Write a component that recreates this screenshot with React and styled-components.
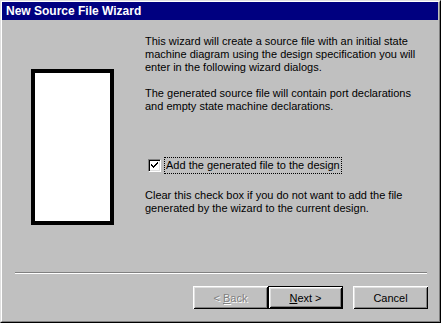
import React from 'react';
import styled, { createGlobalStyle } from 'styled-components';

const GlobalStyle = createGlobalStyle`
    html, body {
        margin: 0;
        padding: 0;
        background: #c0c0c0;
    }
    body {
        font-family: "Liberation Sans", Arial, sans-serif;
        font-size: 11px;
    }
`;

const Window = styled.div`
    box-sizing: border-box;
    width: 441px;
    height: 323px;
    background: #c0c0c0;
    border-top: 1px solid #dfdfdf;
    border-left: 1px solid #dfdfdf;
    border-right: 1px solid #000;
    border-bottom: 1px solid #000;
    display: flex;
    flex-direction: column;
`;

const Frame = styled.div`
    flex: 1;
    display: flex;
    flex-direction: column;
    border-top: 1px solid #fff;
    border-left: 1px solid #fff;
    border-right: 1px solid #808080;
    border-bottom: 1px solid #808080;
    padding: 0 1px 0 0;
`;

const TitleBar = styled.div`
    height: 18px;
    background: #000080;
    color: #fff;
    font-weight: bold;
    font-size: 12px;
    display: flex;
    align-items: center;
    padding-left: 4px;
`;

const Body = styled.div`
    display: flex;
    height: 252px;
`;

const ArtColumn = styled.div`
    width: 143px;
    display: flex;
    align-items: flex-start;
    padding-left: 29px;
    padding-top: 49px;
    box-sizing: border-box;
`;

const Art = styled.div`
    width: 75px;
    height: 148px;
    background: #fff;
    border: 4px solid #000;
`;

const TextColumn = styled.div`
    padding-top: 15px;
    width: 280px;
    color: #000;
    line-height: 13px;
`;

const Para = styled.p`
    margin: 0 0 13px 0;
`;

const CheckRow = styled.div`
    display: flex;
    align-items: center;
    margin: 45px 0 16px 3px;
`;

const Box = styled.span`
    box-sizing: border-box;
    width: 13px;
    height: 13px;
    background: #fff;
    border-top: 1px solid #808080;
    border-left: 1px solid #808080;
    border-right: 1px solid #fff;
    border-bottom: 1px solid #fff;
    box-shadow: inset 1px 1px 0 #000, inset -1px -1px 0 #dfdfdf;
    display: flex;
    align-items: center;
    justify-content: center;
    margin-right: 4px;
`;

const Label = styled.span`
    outline: 1px dotted #000;
    padding: 1px 1px;
    line-height: 13px;
`;

const Separator = styled.div`
    margin: 0 11px 0 13px;
    height: 0;
    border-top: 1px solid #808080;
    border-bottom: 1px solid #fff;
`;

const ButtonRow = styled.div`
    display: flex;
    justify-content: flex-end;
    padding: 12px 10px 0 0;
`;

const Button = styled.button`
    box-sizing: border-box;
    width: 75px;
    height: 23px;
    margin-left: ${(p) => p.gap || 0}px;
    background: #c0c0c0;
    font-family: "Liberation Sans", Arial, sans-serif;
    font-size: 11px;
    color: ${(p) => (p.disabled ? '#808080' : '#000')};
    text-shadow: ${(p) => (p.disabled ? '1px 1px 0 #fff' : 'none')};
    border: ${(p) => (p.primary ? '1px solid #000' : 'none')};
    box-shadow: inset 1px 1px 0 #fff, inset -1px -1px 0 #000, inset 2px 2px 0 #dfdfdf, inset -2px -2px 0 #808080;
    padding: 0;
    display: flex;
    align-items: center;
    justify-content: center;
`;

const App = () => {
    return (
        <>
            <GlobalStyle />
            <Window>
                <Frame>
                    <TitleBar>New Source File Wizard</TitleBar>
                    <Body>
                        <ArtColumn>
                            <Art />
                        </ArtColumn>
                        <TextColumn>
                            <Para>
                                This wizard will create a source file with an initial state
                                machine diagram using the design specification you will
                                enter in the following wizard dialogs.
                            </Para>
                            <Para>
                                The generated source file will contain port declarations
                                and empty state machine declarations.
                            </Para>
                            <CheckRow>
                                <Box>
                                    <svg width="7" height="7" viewBox="0 0 7 7">
                                        <path d="M0 2h1v1h1v1h1V3h1V2h1V1h1V0h1v2H6v1H5v1H4v1H3v1H2V5H1V4H0z" fill="#000" />
                                    </svg>
                                </Box>
                                <Label>Add the generated file to the design</Label>
                            </CheckRow>
                            <Para>
                                Clear this check box if you do not want to add the file
                                generated by the wizard to the current design.
                            </Para>
                        </TextColumn>
                    </Body>
                    <Separator />
                    <ButtonRow>
                        <Button disabled><span>&lt; <u>B</u>ack</span></Button>
                        <Button primary><span><u>N</u>ext &gt;</span></Button>
                        <Button gap={10}>Cancel</Button>
                    </ButtonRow>
                </Frame>
            </Window>
        </>
    );
};

export default App;
